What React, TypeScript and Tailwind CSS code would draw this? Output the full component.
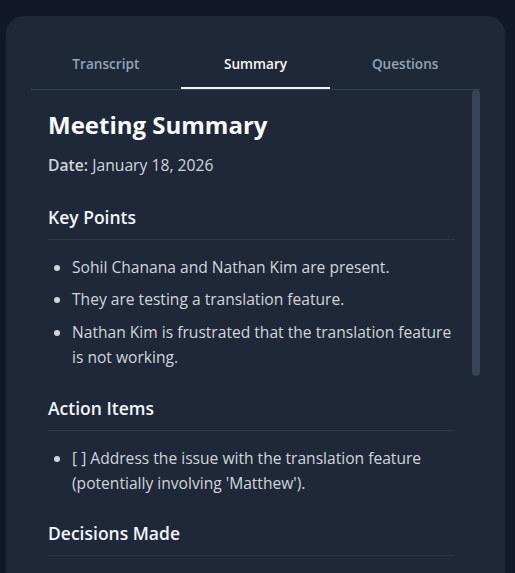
import React from "react";

const font = { fontFamily: '"Open Sans", "Noto Sans", sans-serif' };

function Section({ title, items, mt }: { title: string; items: string[]; mt: string }) {
  return (
    <div className={mt}>
      <h2 className="text-[17.5px] font-semibold leading-[28px] text-[#f1f5f9] pb-[8px] border-b border-[#2c3648]">
        {title}
      </h2>
      {items.length > 0 && (
        <ul className="mt-[14.5px] pl-[24px] list-disc marker:text-[#d1d5db] space-y-[7.5px]">
          {items.map((t) => (
            <li key={t} className="text-[15.6px] leading-[25px] text-[#d1d5db]">
              {t}
            </li>
          ))}
        </ul>
      )}
    </div>
  );
}

export default function App() {
  return (
    <div className="h-screen bg-[#111827] pt-[16px] pl-[6px] overflow-hidden" style={font}>
      <div className="w-[499px] h-[557px] rounded-t-[18px] bg-[#1f2839] px-[25px] pt-[26px] overflow-hidden">
        <div className="grid grid-cols-3 border-b border-[#334155]">
          <button className="h-[47px] text-[13.6px] font-semibold text-[#94a3b8] border-b-2 border-transparent">
            Transcript
          </button>
          <button className="h-[47px] text-[13.6px] font-semibold text-[#f8fafc] border-b-2 border-[#f1f5f9]">
            Summary
          </button>
          <button className="h-[47px] text-[13.6px] font-semibold text-[#94a3b8] border-b-2 border-transparent">
            Questions
          </button>
        </div>
        <div className="relative">
          <div className="absolute right-0 top-0 w-[8px] h-[286px] rounded-full bg-[#374357]" />
          <div className="pl-[17px] pr-[25px] pt-[19px]">
            <h1 className="text-[24px] font-bold leading-[32px] text-[#f8fafc]">Meeting Summary</h1>
            <p className="mt-[12px] text-[15.7px] leading-[24px] text-[#d1d5db]">
              <span className="font-semibold">Date:</span> January 18, 2026
            </p>
            <Section
              mt="mt-[26px]"
              title="Key Points"
              items={[
                "Sohil Chanana and Nathan Kim are present.",
                "They are testing a translation feature.",
                "Nathan Kim is frustrated that the translation feature is not working.",
              ]}
            />
            <Section
              mt="mt-[24.5px]"
              title="Action Items"
              items={["[ ] Address the issue with the translation feature (potentially involving 'Matthew')."]}
            />
            <Section mt="mt-[23.5px]" title="Decisions Made" items={[]} />
          </div>
        </div>
      </div>
    </div>
  );
}
